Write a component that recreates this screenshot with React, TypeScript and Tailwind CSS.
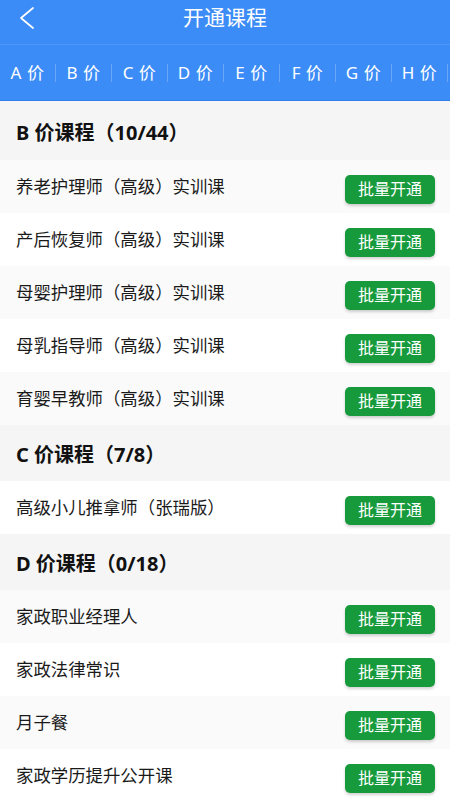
type Course = { name: string }
type Section = { title: string; courses: Course[] }

const tabs = ['A', 'B', 'C', 'D', 'E', 'F', 'G', 'H']

const sections: Section[] = [
  {
    title: 'B 价课程（10/44）',
    courses: [
      { name: '养老护理师（高级）实训课' },
      { name: '产后恢复师（高级）实训课' },
      { name: '母婴护理师（高级）实训课' },
      { name: '母乳指导师（高级）实训课' },
      { name: '育婴早教师（高级）实训课' },
    ],
  },
  {
    title: 'C 价课程（7/8）',
    courses: [{ name: '高级小儿推拿师（张瑞版）' }],
  },
  {
    title: 'D 价课程（0/18）',
    courses: [
      { name: '家政职业经理人' },
      { name: '家政法律常识' },
      { name: '月子餐' },
      { name: '家政学历提升公开课' },
    ],
  },
]

export default function App() {
  let rowIdx = 0
  return (
    <div
      className="w-[450px] h-[800px] overflow-hidden bg-white"
      style={{ fontFamily: '"Noto Sans", "Noto Sans CJK SC", sans-serif' }}
    >
      {/* top bar */}
      <div className="bg-[#3b8cf6]">
        <div className="relative h-[45px] flex items-center justify-center border-b border-[#5c9ff7]/60">
          <svg className="absolute left-0 top-0" width="40" height="40" viewBox="0 0 40 40" fill="none">
            <polyline points="33,8 21,18 33,28" stroke="white" strokeWidth="1.7" strokeLinecap="round" strokeLinejoin="round" />
          </svg>
          <span className="text-white text-[21px] leading-none -mt-[9px]">开通课程</span>
        </div>
        <div className="h-[56px] flex items-center overflow-hidden border-b border-[#2f7fe6]">
          {tabs.map((t) => (
            <div key={t} className="flex items-center shrink-0">
              <span className="w-[55px] text-center text-white text-[17px] tracking-[0.5px]">{t} 价</span>
              <span className="w-px h-[18px] bg-[#6aa8f7]" />
            </div>
          ))}
        </div>
      </div>

      {sections.map((s, si) => (
        <div key={s.title}>
          <div
            className={`${si === 0 ? 'h-[59px]' : 'h-[56px]'} bg-[#f5f5f5] flex items-center px-4`}
          >
            <span className="text-[20px] font-bold text-[#111] mt-1">{s.title}</span>
          </div>
          {s.courses.map((c) => {
            const alt = rowIdx++ % 2 === 0
            return (
              <div
                key={c.name}
                className={`h-[53px] flex items-center justify-between pl-4 pr-[15px] ${alt ? 'bg-[#fafafa]' : 'bg-white'}`}
              >
                <span className="text-[17.4px] text-[#1a1a1a]">{c.name}</span>
                <button className="w-[90px] h-[29px] mt-[5px] rounded-[5px] bg-[#169a3b] text-white text-[16px] shadow-[0_2px_3px_rgba(0,0,0,0.18)]">
                  批量开通
                </button>
              </div>
            )
          })}
        </div>
      ))}
    </div>
  )
}
